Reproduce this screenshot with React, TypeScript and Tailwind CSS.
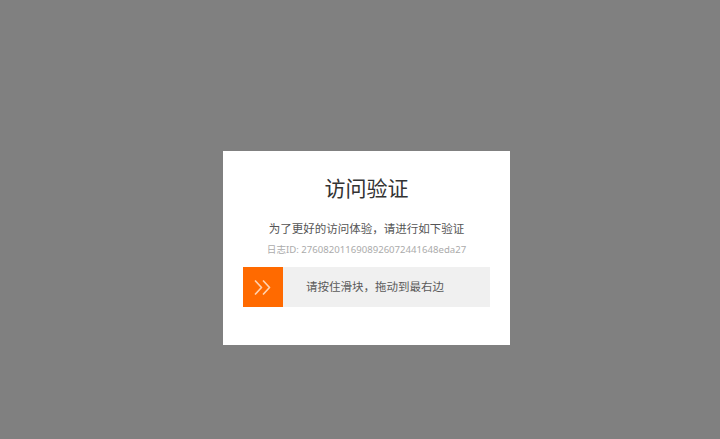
import React from "react";

export default function App() {
  return (
    <div
      className="w-[720px] h-[439px] bg-[#808080] pl-[223px] pt-[151px] overflow-hidden"
      style={{ fontFamily: '"Noto Sans", "Noto Sans CJK SC", sans-serif' }}
    >
      <div className="w-[287px] h-[194px] bg-white flex flex-col items-center">
        <div className="mt-[23px] h-[28px] leading-[28px] text-[21px] text-[#333333]">访问验证</div>
        <div className="mt-[19px] h-[16px] leading-[16px] text-[11.5px] text-[#555555]">
          为了更好的访问体验，请进行如下验证
        </div>
        <div className="mt-[6px] h-[14px] leading-[14px] text-[9.6px] text-[#ababab]">
          日志ID: 2760820116908926072441648eda27
        </div>
        <div className="mt-[10px] w-[247px] h-[40px] bg-[#f0f0f0] flex items-center">
          <div className="w-[40px] h-[40px] bg-[#ff6a00] flex items-center justify-center">
            <svg width="18" height="15" viewBox="0 0 18 15" fill="none">
              <path
                d="M1.5 1 L7.5 7.5 L1.5 14 M9.5 1 L15.5 7.5 L9.5 14"
                stroke="#ffd2b0"
                strokeWidth="1.7"
                strokeLinecap="round"
                strokeLinejoin="round"
              />
            </svg>
          </div>
          <div className="pl-[23px] text-[11.5px] text-[#5a5a5a]">请按住滑块，拖动到最右边</div>
        </div>
      </div>
    </div>
  );
}
